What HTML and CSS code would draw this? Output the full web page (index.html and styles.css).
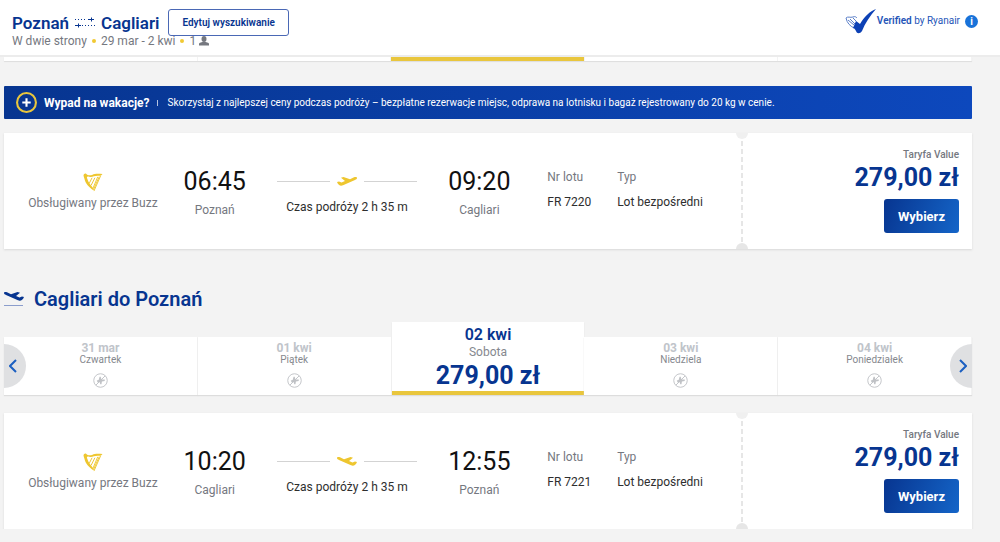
FILE: index.html
```
<!DOCTYPE html>
<html lang="pl">
<head>
    <meta charset="UTF-8">
    <meta name="viewport" content="width=device-width, initial-scale=1.0">
    <title>Poznań - Cagliari</title>
    <link rel="stylesheet" href="styles.css">
</head>
<body>
    <!-- shared icons -->
    <svg class="sprite" aria-hidden="true">
        <symbol id="harp" viewBox="0 0 20 20">
            <path d="M0 3C0 1 2 0 3 1C4 2 6 3 9 2C13 0 17 1 20 1C19 3 17 3 15 3C11 3 9 5 6 4C4 3 3 4 4 6C5 10 8 13 11 17L10 18C6 15 2 11 1 6Z" fill="currentColor"/>
            <path d="M18 3L11 19M15 4L10 16M12 5L8 13M9 5L6 11M16.500 4L10.500 17.500" stroke="currentColor" fill="none"/>
        </symbol>
        <symbol id="takeoff" viewBox="0 0 20 10">
            <path d="M0 6L2 5.500L4.500 6.500L8 5L4 1.800L6.500 1L13 3.200L17 1.300C18.500 .600 20 .800 20 2C20 3 19 3.500 18 4L6 9.300C3.500 10.200 1.500 9.500 0 6Z" fill="currentColor"/>
        </symbol>
        <symbol id="landing" viewBox="0 0 20 10">
            <path d="M20 6L18 5.500L15.500 6.500L12 5L16 1.800L13.500 1L7 3.200L3 1.300C1.500 .600 0 .800 0 2C0 3 1 3.500 2 4L14 9.300C16.500 10.200 18.500 9.500 20 6Z" fill="currentColor"/>
        </symbol>
        <symbol id="no-flight" viewBox="0 0 16 16">
            <circle cx="8" cy="8" r="7.200" fill="none" stroke="currentColor"/>
            <path d="M3 13L13 3" stroke="currentColor"/>
            <path d="M4 8L6 7.500L7 4L8.200 4L9 7L12.500 7L12.500 8.500L9.500 9L9 12L7.800 12L7 9.500L5 10Z" fill="currentColor"/>
        </symbol>
    </svg>

    <header class="topbar">
        <div class="search">
            <div class="search-row">
                <h1 class="route">
                    Poznań
                    <svg class="route-arrows" viewBox="0 0 20 12" fill="none" stroke="currentColor">
                        <path d="M0 2.500H12" stroke-dasharray="1 2"/>
                        <path d="M13 2.500H19M16.500 .500V4.500"/>
                        <path d="M0 8.500H6M3.500 6.500V10.500"/>
                        <path d="M7 8.500H20" stroke-dasharray="1 2"/>
                    </svg>
                    Cagliari
                </h1>
                <button type="button" class="edit-btn">Edytuj wyszukiwanie</button>
            </div>
            <div class="trip">
                <span>W dwie strony</span>
                <span class="dot"></span>
                <span>29 mar - 2 kwi</span>
                <span class="dot"></span>
                <span class="people">1
                    <svg class="person" viewBox="0 0 10 10" fill="currentColor">
                        <ellipse cx="5" cy="3" rx="2.500" ry="3"/>
                        <path d="M0 9.500V8C0 6.500 3 6 5 6S10 6.500 10 8V9.500Z"/>
                    </svg>
                </span>
            </div>
        </div>
        <div class="verified">
            <svg class="verified-logo" viewBox="0 0 32 26">
                <path d="M1 10C3 8 5 10 8 9C10 8 11 9 12 10M1 10C2 15 5 18 9 20M3 12L9 17M5 11L10 16M8 10L11 13" fill="none" stroke="#5c80c9"/>
                <path d="M8 20L11 13L15 16C19 9 25 3 31 1C25 8 20 15 17 23C15 26 12 26 11 23C10 21 9 20 8 20Z" fill="#0d41b5"/>
            </svg>
            <span class="verified-text"><b>Verified</b> by Ryanair</span>
            <button type="button" class="info-btn" aria-label="Informacje">i</button>
        </div>
    </header>

    <main class="content">
        <div class="strip">
            <span></span>
            <span></span>
            <span class="strip-active"></span>
            <span></span>
            <span></span>
        </div>

        <div class="banner">
            <svg class="banner-icon" viewBox="0 0 20 20">
                <circle cx="10" cy="10" r="9" fill="none" stroke="#e9c63d" stroke-width="2"/>
                <path d="M10 6V14M6 10H14" stroke="#fff" stroke-width="2"/>
            </svg>
            <strong class="banner-title">Wypad na wakacje?</strong>
            <span class="banner-text">Skorzystaj z najlepszej ceny podczas podróży – bezpłatne rezerwacje miejsc, odprawa na lotnisku i bagaż rejestrowany do 20 kg w cenie.</span>
        </div>

        <article class="card">
            <div class="flight">
                <div class="carrier">
                    <svg class="harp"><use href="#harp"/></svg>
                    <span>Obsługiwany przez Buzz</span>
                </div>
                <div class="stop">
                    <span class="time">06:45</span>
                    <span class="city">Poznań</span>
                </div>
                <div class="journey">
                    <div class="journey-line"><svg class="plane"><use href="#takeoff"/></svg></div>
                    <span>Czas podróży 2 h 35 m</span>
                </div>
                <div class="stop">
                    <span class="time">09:20</span>
                    <span class="city">Cagliari</span>
                </div>
                <div class="detail number">
                    <span class="label">Nr lotu</span>
                    <span>FR 7220</span>
                </div>
                <div class="detail">
                    <span class="label">Typ</span>
                    <span>Lot bezpośredni</span>
                </div>
            </div>
            <div class="fare">
                <span class="fare-name">Taryfa Value</span>
                <span class="price">279,00 zł</span>
                <button type="button" class="select-btn">Wybierz</button>
            </div>
        </article>

        <h2 class="heading">
            <svg class="heading-icon" viewBox="0 0 20 16">
                <use href="#landing" width="20" height="10"/>
                <path d="M0 14.500H19" stroke="#8b9dcc"/>
            </svg>
            Cagliari do Poznań
        </h2>

        <div class="carousel">
            <div class="day">
                <span class="date">31 mar</span>
                <span class="weekday">Czwartek</span>
                <svg class="no-flight"><use href="#no-flight"/></svg>
            </div>
            <div class="day">
                <span class="date">01 kwi</span>
                <span class="weekday">Piątek</span>
                <svg class="no-flight"><use href="#no-flight"/></svg>
            </div>
            <div class="day day-active">
                <span class="date">02 kwi</span>
                <span class="weekday">Sobota</span>
                <span class="price">279,00 zł</span>
            </div>
            <div class="day">
                <span class="date">03 kwi</span>
                <span class="weekday">Niedziela</span>
                <svg class="no-flight"><use href="#no-flight"/></svg>
            </div>
            <div class="day">
                <span class="date">04 kwi</span>
                <span class="weekday">Poniedziałek</span>
                <svg class="no-flight"><use href="#no-flight"/></svg>
            </div>
            <button type="button" class="nav prev" aria-label="Poprzednie">
                <svg viewBox="0 0 8 14"><path d="M7 1L1 7L7 13"/></svg>
            </button>
            <button type="button" class="nav next" aria-label="Następne">
                <svg viewBox="0 0 8 14"><path d="M1 1L7 7L1 13"/></svg>
            </button>
        </div>

        <article class="card">
            <div class="flight">
                <div class="carrier">
                    <svg class="harp"><use href="#harp"/></svg>
                    <span>Obsługiwany przez Buzz</span>
                </div>
                <div class="stop">
                    <span class="time">10:20</span>
                    <span class="city">Cagliari</span>
                </div>
                <div class="journey">
                    <div class="journey-line"><svg class="plane"><use href="#landing"/></svg></div>
                    <span>Czas podróży 2 h 35 m</span>
                </div>
                <div class="stop">
                    <span class="time">12:55</span>
                    <span class="city">Poznań</span>
                </div>
                <div class="detail number">
                    <span class="label">Nr lotu</span>
                    <span>FR 7221</span>
                </div>
                <div class="detail">
                    <span class="label">Typ</span>
                    <span>Lot bezpośredni</span>
                </div>
            </div>
            <div class="fare">
                <span class="fare-name">Taryfa Value</span>
                <span class="price">279,00 zł</span>
                <button type="button" class="select-btn">Wybierz</button>
            </div>
        </article>
    </main>
</body>
</html>
```

FILE: styles.css
```
* {
    box-sizing: border-box;
}
body {
    margin: 0;
    font-family: Roboto, "Liberation Sans", sans-serif;
    font-size: 12px;
    line-height: 16px;
    color: #2e2e2e;
    background: #f3f3f3;
}
button {
    font-family: inherit;
    cursor: pointer;
}
.sprite {
    display: none;
}

/* top bar */
.topbar {
    display: flex;
    justify-content: space-between;
    align-items: flex-start;
    padding: 9px 22px 9px 12px;
    background: #fff;
    border-bottom: 2px solid #ececec;
}
.search-row {
    display: flex;
    align-items: center;
    gap: 9px;
}
.route {
    display: flex;
    align-items: center;
    gap: 6px;
    margin: 0;
    font-size: 17px;
    line-height: 22px;
    font-weight: 600;
    color: #073590;
}
.route-arrows {
    width: 20px;
    height: 12px;
}
.edit-btn {
    height: 27px;
    padding: 0 13px;
    font-size: 10px;
    font-weight: 600;
    color: #073590;
    background: #fff;
    border: 1px solid #4a68b5;
    border-radius: 3px;
}
.trip {
    display: flex;
    align-items: center;
    gap: 5px;
    line-height: 10px;
    color: #75787f;
}
.dot {
    width: 4px;
    height: 4px;
    border-radius: 50%;
    background: #f1c933;
}
.people {
    display: flex;
    align-items: center;
    gap: 3px;
}
.person {
    width: 10px;
    height: 10px;
}
.verified {
    display: flex;
    align-items: center;
    height: 24px;
}
.verified-logo {
    width: 32px;
    height: 26px;
}
.verified-text {
    margin-right: 5px;
    font-size: 10px;
    color: #2455b8;
}
.verified-text b {
    font-weight: 600;
}
.info-btn {
    width: 13px;
    height: 13px;
    padding: 0;
    font-size: 10px;
    line-height: 13px;
    font-weight: 700;
    color: #fff;
    background: #1872d9;
    border: 0;
    border-radius: 50%;
}

.content {
    margin: 0 28px 0 4px;
}

/* bottom edge of the outbound carousel */
.strip {
    display: flex;
    height: 4px;
    background: #fff;
    box-shadow: 0 1px 1px #ddd;
}
.strip span {
    flex: 1;
    border-right: 1px solid #f3f3f3;
}
.strip .strip-active {
    background: #e9c63d;
}

/* promo */
.banner {
    display: flex;
    align-items: center;
    margin: 25px 0 14px;
    padding: 6px 12px;
    color: #fff;
    background: linear-gradient(90deg, #073590, #0d48bd);
    border-radius: 1px;
}
.banner-icon {
    width: 21px;
    height: 21px;
    margin-right: 7px;
}
.banner-title {
    padding-right: 8px;
    font-weight: 700;
}
.banner-text {
    position: relative;
    padding-left: 10px;
    font-size: 10px;
}
.banner-text::before {
    content: "";
    position: absolute;
    left: 0;
    top: 5px;
    width: 1px;
    height: 6px;
    background: #b6c3e0;
}

/* flight card */
.card {
    display: flex;
    background: #fff;
    box-shadow: 0 1px 2px #d8d8d8;
}
.flight {
    flex: 1;
    display: grid;
    grid-template-columns: 178fr 66fr 199fr 66fr 105fr 124fr;
    align-items: start;
    padding-top: 34px;
}
.carrier,
.stop,
.journey {
    display: flex;
    flex-direction: column;
    align-items: center;
}
.carrier {
    padding-top: 6px;
    gap: 3px;
    color: #75787f;
}
.harp {
    width: 20px;
    height: 19px;
    color: #eec62f;
}
.stop {
    gap: 5px;
}
.time {
    font-size: 25px;
    line-height: 30px;
    color: #111;
}
.city,
.label {
    color: #75787f;
}
.journey {
    padding: 6px 29px 0;
    gap: 10px;
}
.journey-line {
    display: flex;
    align-items: center;
    gap: 7px;
    width: 100%;
    height: 16px;
}
.journey-line::before,
.journey-line::after {
    content: "";
    flex: 1;
    height: 1px;
    background: #d3d3d3;
}
.plane {
    width: 20px;
    height: 10px;
    color: #eec62f;
}
.detail {
    display: flex;
    flex-direction: column;
    gap: 9px;
    padding-top: 2px;
}
.number {
    padding-left: 35px;
}
.fare {
    position: relative;
    display: flex;
    flex-direction: column;
    align-items: flex-end;
    width: 231px;
    padding: 15px 13px 16px;
    background: repeating-linear-gradient(#e6e6e6 0 5px, transparent 5px 8px) left / 2px 100% no-repeat;
}
/* ticket notches */
.fare::before,
.fare::after {
    content: "";
    position: absolute;
    left: -5px;
    width: 12px;
    height: 6px;
    background: #f0f0f0;
}
.fare::before {
    top: 0;
    border-radius: 0 0 6px 6px;
}
.fare::after {
    bottom: 0;
    background: #e6e6e6;
    border-radius: 6px 6px 0 0;
}
.fare-name {
    font-size: 10px;
    line-height: 14px;
    font-weight: 500;
    color: #75787f;
}
.price {
    font-size: 25px;
    line-height: 32px;
    font-weight: 700;
    color: #073590;
}
.select-btn {
    height: 34px;
    margin-top: 5px;
    padding: 0 14px;
    font-size: 13px;
    font-weight: 700;
    color: #fff;
    background: linear-gradient(110deg, #073590, #1565c8);
    border: 0;
    border-radius: 3px;
}

.heading {
    display: flex;
    align-items: center;
    gap: 10px;
    margin: 38px 0 11px;
    font-size: 20px;
    line-height: 24px;
    font-weight: 600;
    color: #073590;
}
.heading-icon {
    width: 20px;
    height: 16px;
}

/* days */
.carousel {
    position: relative;
    display: flex;
    align-items: flex-end;
    margin-bottom: 18px;
}
.day {
    flex: 1;
    display: flex;
    flex-direction: column;
    align-items: center;
    padding: 5px 0 7px;
    background: #fff;
    border-right: 1px solid #f3f3f3;
    box-shadow: 0 1px 1px #ddd;
}
.date {
    line-height: 12px;
    font-weight: 700;
    color: #c0c4ca;
}
.weekday {
    font-size: 10px;
    line-height: 12px;
    color: #85888e;
}
.no-flight {
    width: 15px;
    height: 15px;
    margin-top: 7px;
    color: #c0c2c6;
}
.day-active {
    padding: 4px 0 0;
    border-right: 0;
    border-bottom: 4px solid #e9c63d;
}
.day-active .date {
    font-size: 16px;
    line-height: 18px;
    font-weight: 600;
    color: #073590;
}
.day-active .weekday {
    font-size: 12px;
    line-height: 16px;
}
.day-active .price {
    line-height: 31px;
}
.nav {
    position: absolute;
    bottom: 7px;
    display: flex;
    align-items: center;
    width: 22px;
    height: 44px;
    padding: 0 5px;
    background: #dfe0e2;
    border: 0;
}
.nav svg {
    width: 8px;
    height: 14px;
    fill: none;
    stroke: #1b5fc1;
    stroke-width: 2;
}
.prev {
    left: 0;
    border-radius: 0 22px 22px 0;
}
.next {
    right: 0;
    justify-content: flex-end;
    border-radius: 22px 0 0 22px;
}
```
